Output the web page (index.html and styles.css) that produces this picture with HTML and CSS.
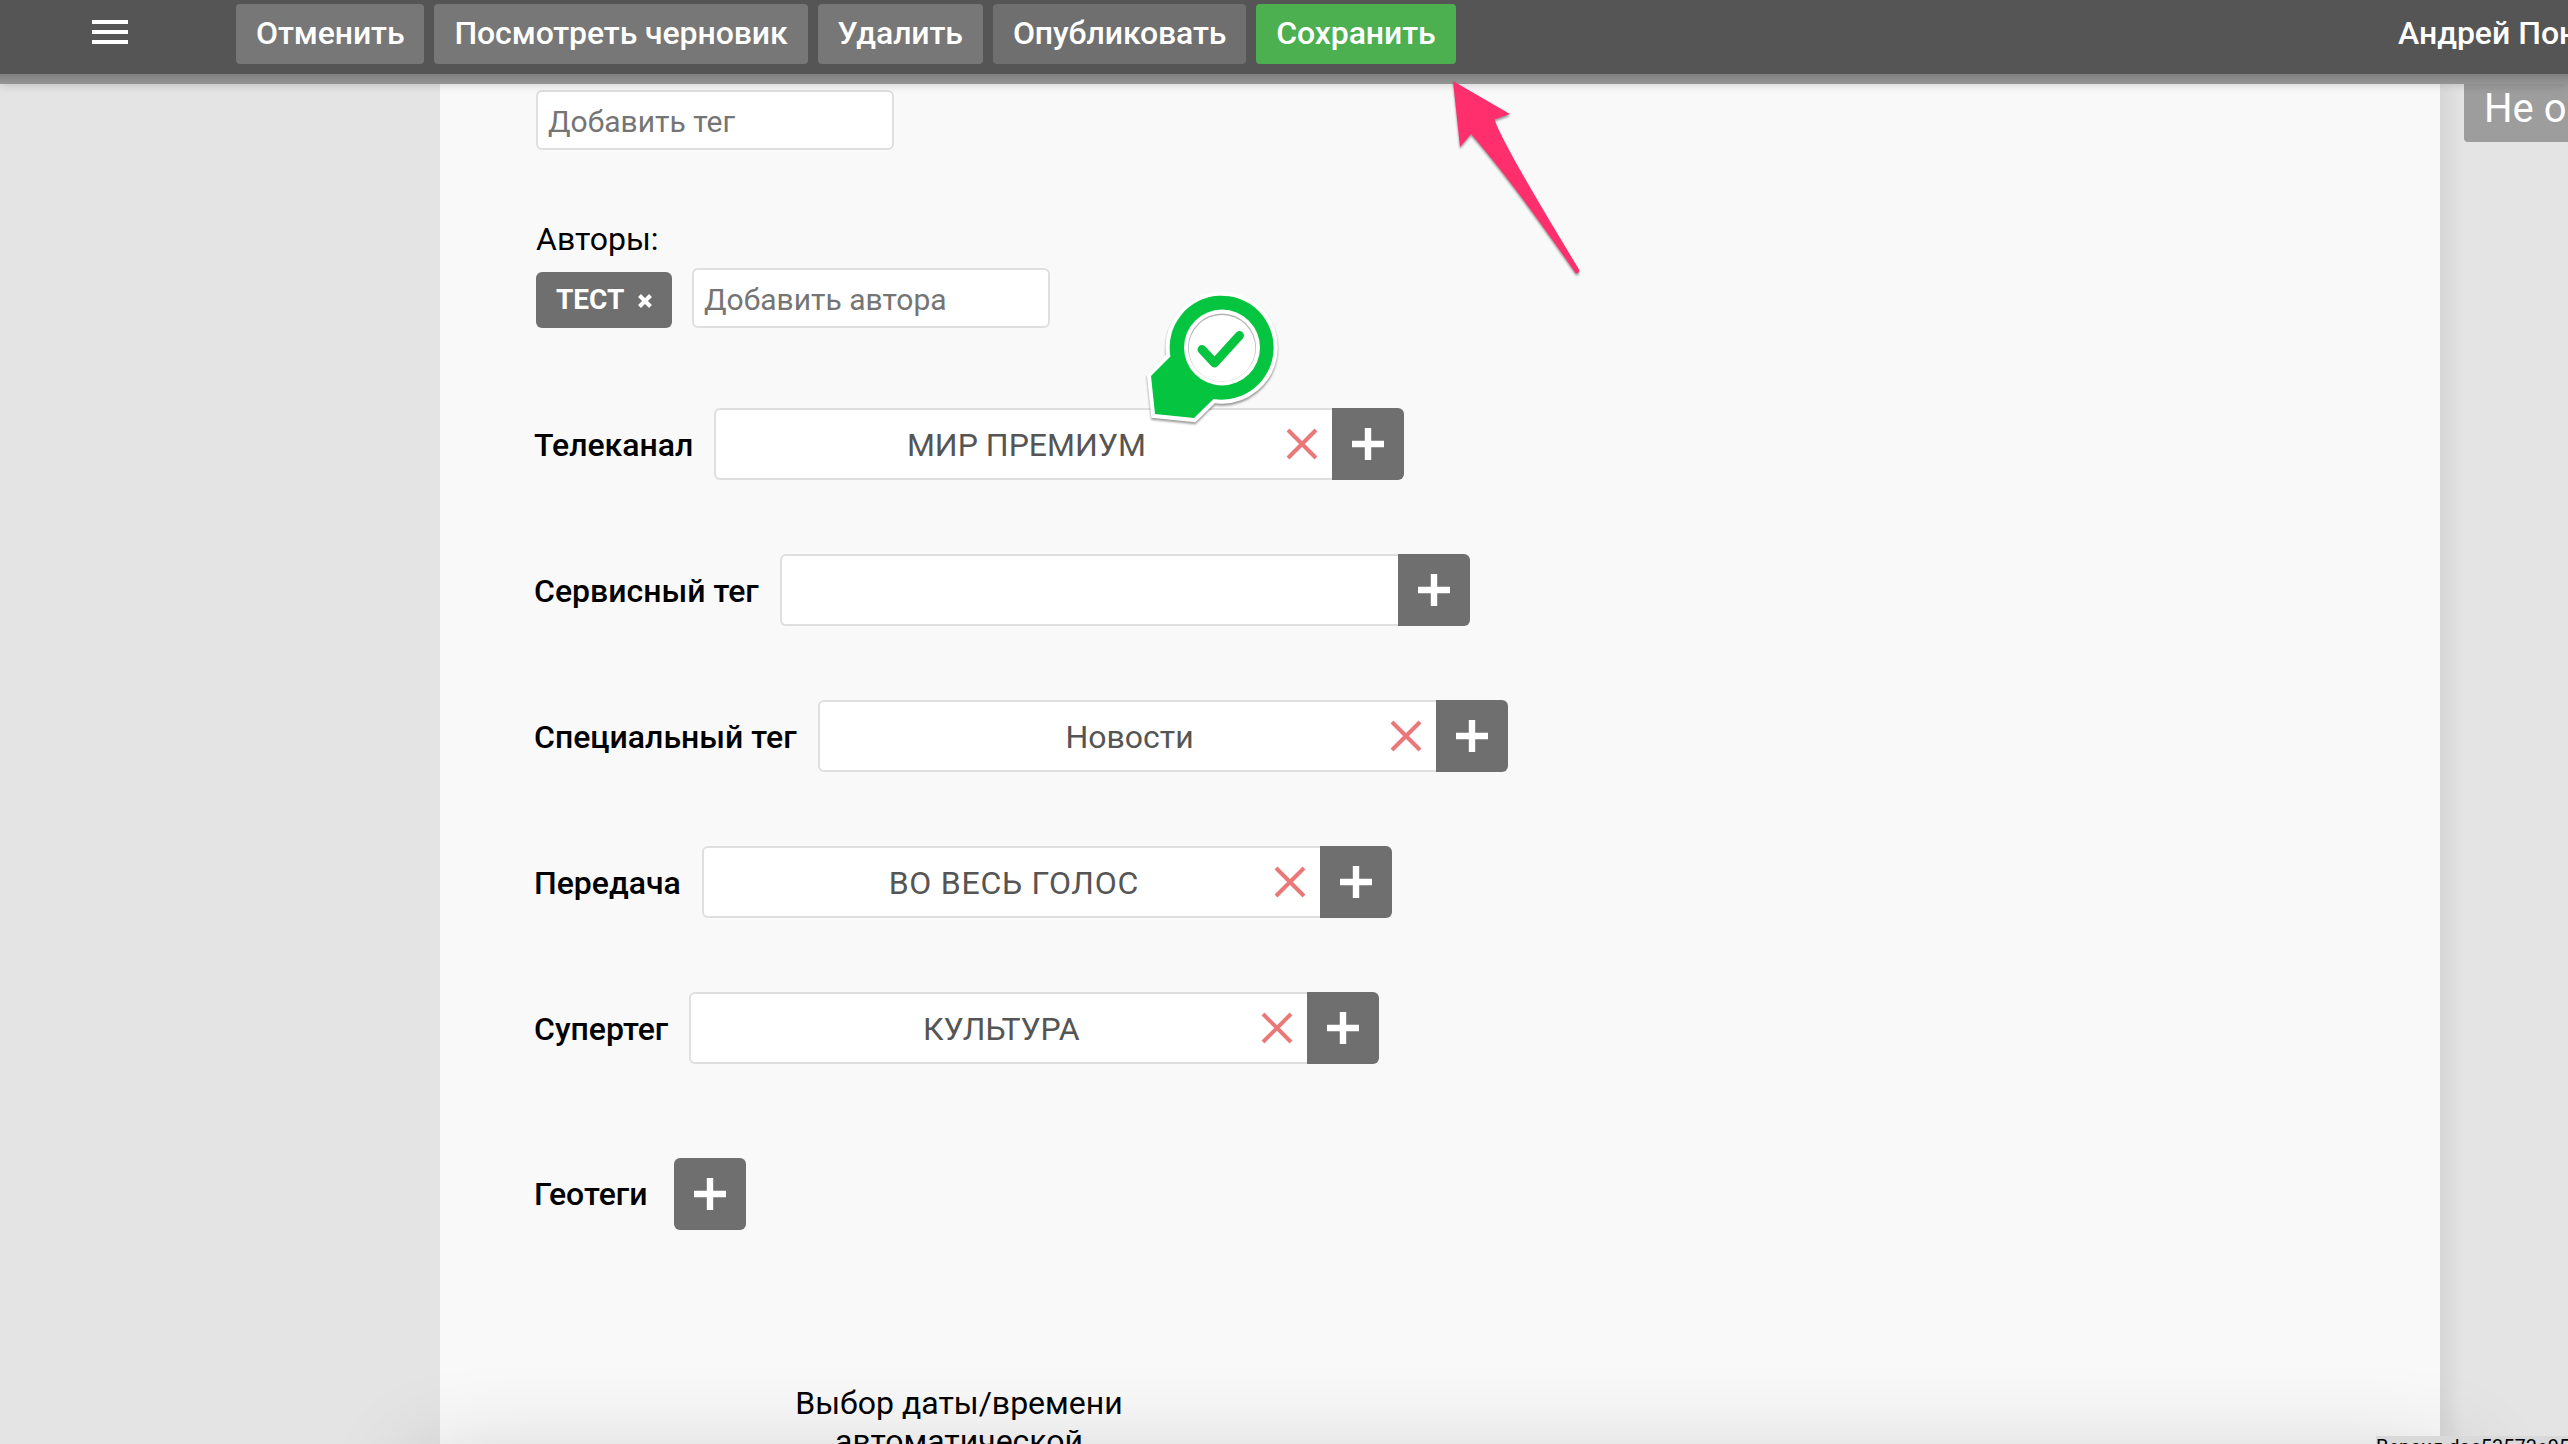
FILE: index.html
```html
<!DOCTYPE html>
<html lang="ru">
<head>
<meta charset="utf-8">
<title>Редактор материала</title>
<link rel="stylesheet" href="styles.css">
</head>
<body>
<header class="topbar">
  <button class="menu" aria-label="Меню"><span></span><span></span><span></span></button>
  <nav class="actions">
    <button class="btn">Отменить</button>
    <button class="btn">Посмотреть черновик</button>
    <button class="btn">Удалить</button>
    <button class="btn btn-dark">Опубликовать</button>
    <button class="btn btn-save">Сохранить</button>
  </nav>
  <div class="user">Андрей Пон</div>
</header>
<div class="shell">
  <main class="page">
    <input class="input" placeholder="Добавить тег">
    <div class="authors-title">Авторы:</div>
    <div class="authors">
      <span class="tag">ТЕСТ <svg width="14" height="14" viewBox="0 0 14 14"><path d="M1.500 1.500L12.500 12.500M12.500 1.500L1.500 12.500"/></svg></span>
      <input class="input" placeholder="Добавить автора">
    </div>
    <div class="rows">
      <div class="row"><label>Телеканал</label><div class="field"><span>МИР ПРЕМИУМ</span><svg class="clear" viewBox="0 0 32 32"><path d="M2 2L30 30M30 2L2 30"/></svg></div><button class="add"><svg viewBox="0 0 32 32"><path d="M16 0V32M0 16H32"/></svg></button></div>
      <div class="row"><label>Сервисный тег</label><div class="field"></div><button class="add"><svg viewBox="0 0 32 32"><path d="M16 0V32M0 16H32"/></svg></button></div>
      <div class="row"><label>Специальный тег</label><div class="field"><span>Новости</span><svg class="clear" viewBox="0 0 32 32"><path d="M2 2L30 30M30 2L2 30"/></svg></div><button class="add"><svg viewBox="0 0 32 32"><path d="M16 0V32M0 16H32"/></svg></button></div>
      <div class="row"><label>Передача</label><div class="field"><span class="spaced">ВО ВЕСЬ ГОЛОС</span><svg class="clear" viewBox="0 0 32 32"><path d="M2 2L30 30M30 2L2 30"/></svg></div><button class="add"><svg viewBox="0 0 32 32"><path d="M16 0V32M0 16H32"/></svg></button></div>
      <div class="row"><label>Супертег</label><div class="field"><span>КУЛЬТУРА</span><svg class="clear" viewBox="0 0 32 32"><path d="M2 2L30 30M30 2L2 30"/></svg></div><button class="add"><svg viewBox="0 0 32 32"><path d="M16 0V32M0 16H32"/></svg></button></div>
    </div>
    <div class="row geo"><label>Геотеги</label><button class="add"><svg viewBox="0 0 32 32"><path d="M16 0V32M0 16H32"/></svg></button></div>
    <p class="schedule">Выбор даты/времени<br>автоматической</p>
  </main>
</div>
<div class="status">Не о</div>
<div class="bottom-shade"></div>
<div class="version">Версия dac53573e95</div>
<svg class="notes" viewBox="0 0 2568 1444">
  <path class="arrow" d="M1453 81L1510 114L1494.500 119.500Q1502 143 1579 269.500Q1579.500 274 1575.500 273Q1515 185 1471 134L1460 147Z"/>
  <g class="pin">
    <path class="pin-body" d="M1170.400 356.500A52 52 0 1 1 1213.500 399L1194 418L1155 414L1151 376Z"/>
    <circle class="pin-face" cx="1222" cy="347.500" r="38"/>
    <circle class="pin-rim" cx="1222" cy="347.500" r="34"/>
    <circle class="pin-face" cx="1222" cy="348.300" r="33.300"/>
    <path class="pin-check" d="M1202 349.500L1214.500 363L1239.500 335.500"/>
  </g>
</svg>
</body>
</html>
```
FILE: styles.css
```css
* { box-sizing: border-box; }
body { margin: 0; width: 2568px; height: 1444px; overflow: hidden; position: relative; background: #e4e4e4; font: 32px/38px Roboto, sans-serif; color: #000; }
button { border: 0; padding: 0; font: inherit; color: #fff; }
.topbar { position: relative; z-index: 2; display: flex; height: 84px; padding: 4px 0 0 92px; background: linear-gradient(#555 0 74px, #808080 74px, #959595 84px); box-shadow: 0 0 10px rgba(0,0,0,.2); color: #fff; font-weight: 500; }
.menu { width: 36px; height: 24px; margin: 16px 108px 0 0; background: none; display: flex; flex-direction: column; gap: 6px; }
.menu span { width: 36px; height: 4px; background: #fff; }
.actions { display: flex; gap: 10px; }
.btn { height: 60px; padding: 0 20px 2px; border-radius: 4px; background: #777; font-weight: 500; letter-spacing: -.1px; white-space: nowrap; }
.btn-dark { background: #6f6f6f; }
.btn-save { background: #4caf50; }
.user { margin-left: auto; width: 170px; padding-top: 10px; white-space: nowrap; overflow: hidden; }
.shell { display: flex; height: 1360px; padding-left: 440px; overflow: hidden; }
.page { width: 2000px; height: 1360px; padding: 6px 96px 0; background: #f9f9f9; box-shadow: 12px 0 14px rgba(0,0,0,.06); }
.input { display: block; width: 358px; height: 60px; padding: 2px 10px 0; border: 2px solid #dfdfdf; border-radius: 6px; background: #fff; font: 30px Roboto, sans-serif; }
.input::placeholder { color: #757575; }
.authors-title { margin-top: 70px; height: 48px; }
.authors { display: flex; align-items: flex-end; gap: 20px; height: 60px; }
.tag { display: flex; align-items: center; gap: 14px; width: 136px; height: 56px; padding-left: 20px; border-radius: 6px; background: #6f6f6f; color: #fff; font-size: 28px; font-weight: 700; }
.tag svg { margin-top: 1px; fill: none; stroke: #fff; stroke-width: 4; }
.rows { display: flex; flex-direction: column; gap: 74px; margin-top: 80px; }
.row { display: flex; align-items: center; height: 72px; margin-left: -2px; }
.row label { font-weight: 500; margin-right: 21px; padding-top: 1px; white-space: nowrap; }
.field { display: flex; align-items: center; width: 618px; height: 72px; border: 2px solid #dfdfdf; border-right: 0; border-radius: 6px 0 0 6px; background: #fff; color: #555; padding-right: 14px; }
.field span { flex: 1; text-align: center; padding: 1px 0 0 50px; }
.field .spaced { letter-spacing: .75px; }
.clear { width: 32px; height: 32px; stroke: #eb7878; stroke-width: 4; fill: none; }
.add { width: 72px; height: 72px; background: #6f6f6f; border-radius: 0 6px 6px 0; display: flex; align-items: center; justify-content: center; }
.add svg { width: 32px; height: 32px; stroke: #fff; stroke-width: 6.400; }
.geo { margin-top: 94px; }
.geo label { margin-right: 27px; padding: 0 0 1px; }
.geo .add { border-radius: 6px; }
.schedule { margin: 154px 0 0 223px; width: 400px; text-align: center; }
.status { position: absolute; left: 2464px; top: 70px; width: 110px; height: 72px; padding: 15px 0 0 20px; border-radius: 4px; background: #9d9d9d; color: #fff; font: 40px/47px Roboto, sans-serif; white-space: nowrap; overflow: hidden; }
.bottom-shade { position: absolute; left: 420px; top: 1464px; width: 2040px; height: 300px; box-shadow: 0 0 100px rgba(0,0,0,.2); }
.version { position: absolute; left: 2376px; top: 1436px; width: 192px; height: 8px; background: #d9d9d9; font: 20px/23px Roboto, sans-serif; white-space: nowrap; overflow: hidden; }
.notes { position: absolute; z-index: 3; inset: 0; width: 2568px; height: 1444px; pointer-events: none; }
.arrow { fill: #ff2f6d; filter: drop-shadow(0 2px 1px rgba(0,0,0,.4)); }
.pin { filter: drop-shadow(0 2px 1px rgba(0,0,0,.4)); }
.pin-body { fill: #05c540; stroke: #fff; stroke-width: 8; paint-order: stroke; }
.pin-face { fill: #fff; }
.pin-rim { fill: #b5b5b5; }
.pin-check { fill: none; stroke: #05c540; stroke-width: 9; stroke-linecap: round; stroke-linejoin: round; }
```
